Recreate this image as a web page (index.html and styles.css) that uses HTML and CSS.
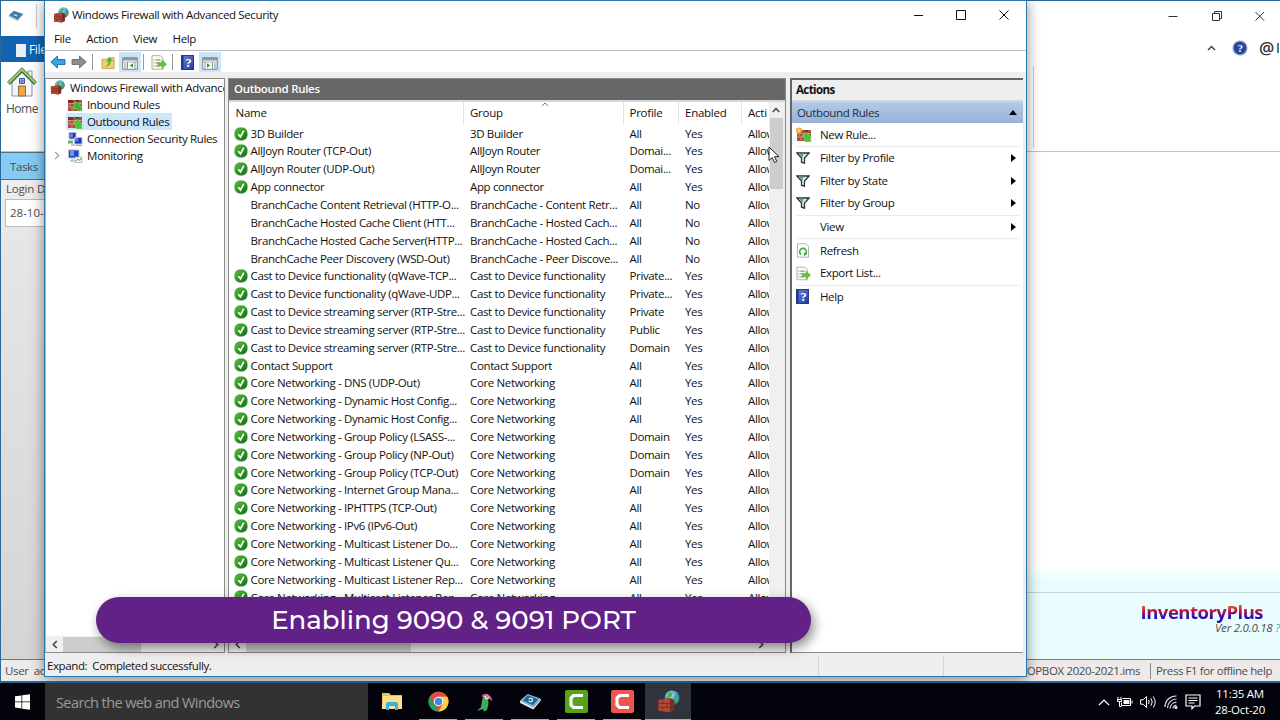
FILE: index.html
```html
<!DOCTYPE html>
<html lang="en">
<head>
  <meta charset="UTF-8">
  <meta name="viewport" content="width=device-width, initial-scale=1.0">
  <title>Windows Firewall with Advanced Security</title>
  <link rel="stylesheet" href="styles.css">
</head>
<body>
  <!-- Shared icons -->
  <svg class="sprite" width="0" height="0">
    <defs>
      <linearGradient id="green" x1="0" y1="0" x2="1" y2="1">
        <stop offset="0" stop-color="#5cc23c"/><stop offset="1" stop-color="#0c6a12"/>
      </linearGradient>
      <linearGradient id="blue" x1="0" y1="0" x2="1" y2="1">
        <stop offset="0" stop-color="#6c86dc"/><stop offset="1" stop-color="#1f3a9c"/>
      </linearGradient>
      <radialGradient id="globe" cx=".4" cy=".3" r=".8">
        <stop offset="0" stop-color="#c4ecf4"/><stop offset=".5" stop-color="#3b9cc8"/><stop offset="1" stop-color="#175a92"/>
      </radialGradient>
    </defs>
    <symbol id="i-firewall" viewBox="0 0 16 16">
      <circle cx="10.5" cy="5.5" r="5.2" fill="url(#globe)"/>
      <path d="M8 1.5l3 .3-1 3-3 1zM12 4l3 1-1 4-2-2z" fill="#4fae55"/>
      <path d="M1 7l8-1.500 3 1.500v7l-3 1.500-8-1z" fill="#7d2c22"/>
      <path d="M1 7l8-1.500v10l-8-1z" fill="#b04a36"/>
      <path d="M1 9.400h11M1 12h11M4 7v2.400M7 9.400V12M4 12v2.500M10 6.500v3" stroke="#7c2a1f" stroke-width=".6" fill="none"/>
    </symbol>
    <symbol id="i-wall" viewBox="0 0 16 14">
      <path d="M1 2h14v11H1z" fill="#a9503c"/>
      <path d="M1 5.500h14M1 9h14M5 2v3.500M11 2v3.500M8 5.500V9M3 5.500V9M5 9v4" stroke="#dba48c" stroke-width=".7"/>
      <path d="M1 2h5v3H1zM9 2h3v3H9z" fill="#7d2c22"/>
    </symbol>
    <symbol id="i-inbound" viewBox="0 0 16 14">
      <use href="#i-wall" width="16" height="14"/>
      <path d="M7 4.500l7.500.5-2 2 3 3.500-3 3-3.500-3.500L7 12z" fill="#35b82f" stroke="#b9eaa8" stroke-width=".5"/>
    </symbol>
    <symbol id="i-outbound" viewBox="0 0 16 14">
      <use href="#i-wall" width="16" height="14"/>
      <path d="M6 8l4.500-4 5 5.500-1 .5.800 4H9l-.500-4.500z" fill="#46c437" stroke="#b9eaa8" stroke-width=".5"/>
    </symbol>
    <symbol id="i-new" viewBox="0 0 16 15">
      <use href="#i-wall" y="1" width="16" height="14"/>
      <path d="M6 9l4.500-4 5 5.500-1 .5.800 4H9l-.500-4.500z" fill="#46c437" stroke="#b9eaa8" stroke-width=".5"/>
      <circle cx="3" cy="3.500" r="3" fill="#f5a83a"/>
      <circle cx="3" cy="3.500" r="1.300" fill="#fde28a"/>
    </symbol>
    <symbol id="i-connection" viewBox="0 0 16 14">
      <path d="M2 .5h7v6.500H2zM7.500 5.500H15V12H7.500z" fill="#1b2fc0" stroke="#b9c4dc"/>
      <path d="M3 1.500h3v4H3zM8.500 6.500h3v3h-3z" fill="#5f86ee"/>
      <path d="M1 8.500h5v3H1z" fill="#6db36a"/>
      <path d="M4 13h4M9 13.300h6" stroke="#8b93a5"/>
    </symbol>
    <symbol id="i-monitor" viewBox="0 0 16 14">
      <path d="M1.500 1H12v8H1.500z" fill="#2444c4" stroke="#b4bccb"/>
      <path d="M3 2h4v5H3z" fill="#6c94ee"/>
      <path d="M3 12h7M5 10v2" stroke="#9aa2b3"/>
      <path d="M8 8h7v5.500H8z" fill="#eef6ee" stroke="#9db0a5" stroke-width=".7"/>
      <path d="M9 12l2-2 1.500 1.500L14.500 9" stroke="#4eaa50" fill="none"/>
    </symbol>
    <symbol id="i-check" viewBox="0 0 14 14">
      <rect x=".8" y=".8" width="12.400" height="12.400" rx="5" fill="url(#green)" stroke="#3d9a33" stroke-width=".6"/>
      <path d="M4.300 7.200l2.200 2.600L9.800 3.600" fill="none" stroke="#fff" stroke-width="1.700"/>
    </symbol>
    <symbol id="i-back" viewBox="0 0 16 14">
      <path d="M.8 7L7.500 1v3.500H15v5H7.500V13z" fill="#3ba3e0" stroke="#1668a6" stroke-width=".9"/>
    </symbol>
    <symbol id="i-forward" viewBox="0 0 16 14">
      <path d="M15.200 7L8.500 1v3.500H1v5h7.500V13z" fill="#8d8d8d" stroke="#6e6e6e" stroke-width=".9"/>
    </symbol>
    <symbol id="i-up" viewBox="0 0 16 15">
      <path d="M1 4h5l1.500-1.500H14V14H1z" fill="#efcf72" stroke="#b8964a" stroke-width=".8"/>
      <path d="M4 12c3-1 4-3 4-5.500H5.500L9 1.500l4 4.500h-2.500C10.500 9.500 8 12 4 12z" fill="#51b52f"/>
    </symbol>
    <symbol id="i-pane" viewBox="0 0 16 13">
      <path d="M.7.7h14.600v11.600H.7z" fill="#fff" stroke="#7d858c"/>
      <path d="M1 1h14v2.500H1z" fill="#8f979e"/>
      <path d="M1 5h14" stroke="#a9b0b6"/>
    </symbol>
    <symbol id="i-tree" viewBox="0 0 16 13">
      <use href="#i-pane" width="16" height="13"/>
      <path d="M5.500 5v7M2 7h2.500M2 9h2.500M2 11h2.500M13 5v7" stroke="#8b9298"/><path d="M11 6.200v4.600L7.800 8.500z" fill="#2b9c2b"/>
    </symbol>
    <symbol id="i-actions" viewBox="0 0 16 13">
      <use href="#i-pane" width="16" height="13"/>
      <path d="M10.500 5v7M12 7h2.500M12 9h2.500M12 11h2.500M3 5v7" stroke="#8b9298"/><path d="M5 6.200v4.600l3.200-2.300z" fill="#2b9c2b"/>
    </symbol>
    <symbol id="i-export" viewBox="0 0 16 15">
      <path d="M1 .7h8.500L12 3.200v11H1z" fill="#fffdf0" stroke="#a09f88" stroke-width=".8"/>
      <path d="M2.500 5h1M2.500 8h1M2.500 11h1M4.500 5h5M4.500 8h3M4.500 11h4" stroke="#77776c"/>
      <path d="M7 7.500h4V5l4.500 4.200L11 13.500V11H7z" fill="#63c83e" stroke="#3c9a25" stroke-width=".5"/>
    </symbol>
    <symbol id="i-help" viewBox="0 0 13 15">
      <rect x=".5" y=".5" width="12" height="14" fill="url(#blue)" stroke="#243a8c"/>
      <path d="M1 1h1.500v13H1z" fill="#1e3592"/>
      <text x="7.300" y="12.300" class="glyph big" text-anchor="middle" fill="#fff">?</text>
    </symbol>
    <symbol id="i-refresh" viewBox="0 0 14 15">
      <path d="M1.500.7h8.500L12.500 3.200v11h-11z" fill="#fff" stroke="#a0a5a0" stroke-width=".8"/>
      <path d="M5 11.500A3.400 3.400 0 1 1 9 11.500" stroke="#3eae3c" stroke-width="1.600" fill="none"/>
      <path d="M8 9v4l3-1.500z" fill="#3eae3c"/>
    </symbol>
    <symbol id="i-filter" viewBox="0 0 14 12">
      <path d="M.8 1h12.400L8.500 6v5.200l-3-1V6z" fill="#dfe9e9" stroke="#22383c" stroke-width="1.300"/>
      <path d="M2.500 1.500h5l-1 4z" fill="#71918f"/>
    </symbol>
  </svg>

  <div class="desktop">
    <!-- InventoryPlus window behind -->
    <div class="inventory">
      <div class="inv-title">
        <svg class="inv-logo" width="16" height="12" viewBox="0 0 24 18"><path d="M1 8L9 1l14 5-8 9z" fill="#3f83b0"/><path d="M1 8l14 7v2L1 10z" fill="#a3bfd0"/><path d="M9 5l7 2-3 4-6-3z" fill="#a8d8ee" stroke="#17466e"/></svg>
        <span class="inv-divider"></span>
        <svg class="inv-controls" width="102" height="14" viewBox="0 0 102 14" fill="none" stroke="#333">
          <path d="M.5 7.500h9M44.500 4.500h7v7h-7zM46.500 4.500v-2h7v7h-2M87.500 3l8.500 8.500M96 3l-8.500 8.500"/>
        </svg>
      </div>
      <div class="inv-tabs">
        <div class="inv-file"><span class="page"></span>File</div>
        <div class="inv-help">
          <svg width="9" height="6" viewBox="0 0 9 6"><path d="M1 5l3.500-3.500L8 5" fill="none" stroke="#444" stroke-width="1.500"/></svg>
          <svg width="16" height="16" viewBox="0 0 16 16"><circle cx="8" cy="8" r="6.900" fill="#2745a0" stroke="#8c9bc4" stroke-width="1.300"/><text x="8" y="12" text-anchor="middle" class="glyph" fill="#fff">?</text></svg>
          <span class="at">@</span>
          <span class="at-edge"></span>
        </div>
      </div>
      <div class="inv-ribbon">
        <div class="home">
          <svg width="30" height="32" viewBox="0 0 30 32">
            <path d="M21 4h4v8h-4z" fill="#f6f6f6" stroke="#8790a4"/>
            <path d="M5 14L15 4l10 10v15H5z" fill="#f4f5fa" stroke="#8790ae"/>
            <path d="M1.500 16.500L15 3l13.500 13.500" fill="none" stroke="#3f7234" stroke-width="4"/>
            <path d="M1.500 16L15 2.500 28.500 16" fill="none" stroke="#a7cf75" stroke-width="1.800"/>
            <path d="M12.500 11.500h5v5h-5z" fill="#9dbbe6" stroke="#46588e"/><path d="M15 11.500v5M12.500 14h5" stroke="#46588e" stroke-width=".7"/>
            <path d="M11.500 19h7v10h-7z" fill="#eda44d" stroke="#9b6930"/>
          </svg>
          <span>Home</span>
        </div>
        <span class="ribbon-edge"></span>
      </div>
      <div class="inv-main">
        <div class="inv-side">
          <div class="tasks">Tasks</div>
          <div class="login">Login D</div>
          <div class="date">28-10-</div>
        </div>
        <div class="inv-page">
          <div class="brand">
            <div class="brand-name">InventoryPlus</div>
            <div class="brand-version">Ver 2.0.0.18 <span>?</span></div>
          </div>
        </div>
      </div>
      <div class="inv-status">
        <span>User&nbsp; ad</span>
        <div class="inv-status-right">
          <span>ROPBOX 2020-2021.ims</span>
          <span class="offline">Press F1 for offline help</span>
        </div>
      </div>
    </div>

    <!-- Firewall console -->
    <div class="window">
      <div class="titlebar">
        <svg width="16" height="16"><use href="#i-firewall"/></svg>
        <span>Windows Firewall with Advanced Security</span>
        <svg class="controls" width="98" height="12" viewBox="0 0 98 12" fill="none" stroke="#111">
          <path d="M1 6.500h9M43.500 1.500h9v9h-9zM86.500 1.500l9 9M95.500 1.500l-9 9"/>
        </svg>
      </div>
      <div class="menubar"><span>File</span><span>Action</span><span>View</span><span>Help</span></div>
      <div class="toolbar">
        <svg width="16" height="14"><use href="#i-back"/></svg>
        <svg class="forward" width="16" height="14"><use href="#i-forward"/></svg>
        <i></i>
        <svg width="15" height="15"><use href="#i-up"/></svg>
        <span class="pressed"><svg width="16" height="13"><use href="#i-tree"/></svg></span>
        <i class="near"></i>
        <svg width="16" height="15"><use href="#i-export"/></svg>
        <i></i>
        <svg width="13" height="15"><use href="#i-help"/></svg>
        <span class="pressed last"><svg width="16" height="13"><use href="#i-actions"/></svg></span>
      </div>

      <div class="panes">
        <div class="tree-pane">
          <div class="tree">
            <div class="root"><svg width="15" height="15"><use href="#i-firewall"/></svg><span>Windows Firewall with Advance</span></div>
            <div class="node"><svg width="16" height="14"><use href="#i-inbound"/></svg><span>Inbound Rules</span></div>
            <div class="node selected"><svg width="16" height="14"><use href="#i-outbound"/></svg><span>Outbound Rules</span></div>
            <div class="node"><svg width="16" height="14"><use href="#i-connection"/></svg><span>Connection Security Rules</span></div>
            <div class="node expandable"><svg class="twisty" width="6" height="9" viewBox="0 0 6 9"><path d="M1 .8l3.700 3.700L1 8.200" fill="none" stroke="#999" stroke-width="1.200"/></svg><svg width="16" height="14"><use href="#i-monitor"/></svg><span>Monitoring</span></div>
          </div>
          <div class="hscroll">
            <svg width="6" height="9" viewBox="0 0 6 9"><path d="M4.800 1L1.300 4.500 4.800 8" fill="none" stroke="#444" stroke-width="1.600"/></svg>
            <span class="thumb tree-thumb"></span>
            <svg class="right" width="6" height="9" viewBox="0 0 6 9"><path d="M1.200 1l3.500 3.500L1.200 8" fill="none" stroke="#444" stroke-width="1.600"/></svg>
          </div>
        </div>

        <div class="list-pane">
          <div class="list-title">Outbound Rules</div>
          <div class="list-body">
            <div class="table">
              <div class="row head">
                <span></span><span>Name</span>
                <span class="sorted">Group<svg width="8" height="5" viewBox="0 0 8 5"><path d="M.8 4L4 1l3.200 3" fill="none" stroke="#777"/></svg></span>
                <span>Profile</span><span>Enabled</span><span>Acti</span>
              </div>
              <div id="rules"></div>
            </div>
            <div class="vscroll">
              <svg width="8" height="6" viewBox="0 0 8 6"><path d="M.8 5L4 1.500 7.200 5" fill="none" stroke="#444" stroke-width="1.500"/></svg>
              <span></span>
            </div>
          </div>
          <div class="hscroll">
            <svg width="6" height="9" viewBox="0 0 6 9"><path d="M4.800 1L1.300 4.500 4.800 8" fill="none" stroke="#444" stroke-width="1.600"/></svg>
            <span class="thumb list-thumb"></span>
            <svg class="right" width="6" height="9" viewBox="0 0 6 9"><path d="M1.200 1l3.500 3.500L1.200 8" fill="none" stroke="#444" stroke-width="1.600"/></svg>
          </div>
        </div>

        <div class="actions-pane">
          <div class="actions-title">Actions</div>
          <div class="actions-head">Outbound Rules<b class="up"></b></div>
          <div class="action"><svg width="16" height="15"><use href="#i-new"/></svg>New Rule...</div>
          <hr>
          <div class="action"><svg width="14" height="12"><use href="#i-filter"/></svg>Filter by Profile<b></b></div>
          <div class="action"><svg width="14" height="12"><use href="#i-filter"/></svg>Filter by State<b></b></div>
          <div class="action"><svg width="14" height="12"><use href="#i-filter"/></svg>Filter by Group<b></b></div>
          <hr>
          <div class="action">View<b></b></div>
          <hr>
          <div class="action"><svg width="14" height="15"><use href="#i-refresh"/></svg>Refresh</div>
          <div class="action"><svg width="15" height="15"><use href="#i-export"/></svg>Export List...</div>
          <hr>
          <div class="action"><svg width="13" height="15"><use href="#i-help"/></svg>Help</div>
        </div>
      </div>
      <div class="statusbar"><span>Expand:&nbsp; Completed successfully.</span><i></i><i></i></div>
    </div>

    <svg class="cursor" width="12" height="18" viewBox="0 0 12 18"><path d="M1 1v13.500l3.200-3 2.300 5 2.300-1-2.300-4.800H11z" fill="#fff" stroke="#222"/></svg>
    <div class="banner">Enabling 9090 &amp; 9091 PORT</div>

    <div class="taskbar">
      <div class="start"><svg width="15" height="16" viewBox="0 0 15 16" fill="#fff"><path d="M0 2.300l6.500-.9v6.200H0zM7.200 1.300L15 .2v7.400H7.200zM0 8.300h6.500v6.200L0 13.600zM7.200 8.300H15v7.500l-7.800-1.100z"/></svg></div>
      <div class="search">Search the web and Windows</div>
      <div class="apps">
        <div class="app"><svg width="20" height="19" viewBox="0 0 20 19"><path d="M0 1h7l2 2h11v14H0z" fill="#e9bf55"/><path d="M1 4h19v13H0z" fill="#fbe08a"/><path d="M4 18v-6q0-2 2-2h8q2 0 2 2v6h-3v-4H7v4z" fill="#37afe0"/></svg></div>
        <div class="app running"><svg width="21" height="21" viewBox="0 0 22 22"><circle cx="11" cy="11" r="10.500" fill="#dd4f42"/><path d="M2 5.600l5 8.600L11 21.500A10.500 10.500 0 0 1 2 5.600z" fill="#21a25c"/><path d="M11 6h9.300A10.500 10.500 0 0 1 11 21.500l4.500-8z" fill="#fdcf44"/><circle cx="11" cy="11" r="5" fill="#fff"/><circle cx="11" cy="11" r="3.900" fill="#4285e8"/></svg></div>
        <div class="app running"><svg width="18" height="20" viewBox="0 0 18 20"><path d="M8 4l5 1 .5 7-1.500 6-3 1.500-1-2.500-6 2 4-4 1-6z" fill="#3faa57"/><path d="M6.500 4q2-3 6-2 4 2 5 7l-3-2-5-1z" fill="#d45a86"/><path d="M9 4l4-.500 1 3-3 1z" fill="#f4f4f4"/><circle cx="12" cy="5" r=".8" fill="#222"/></svg></div>
        <div class="app running"><svg width="23" height="17" viewBox="0 0 24 18"><path d="M1 8L9 1l14 5-8 9z" fill="#86b7d8"/><path d="M1 8l14 7v2.500L1 10.500zM15 15l8-9v2l-8 9.500z" fill="#e2e9ee"/><path d="M9 2.500l11 4-5.500 6.500L4 8z" fill="#226294"/><path d="M10 6q5-1 4 2t-4 0" stroke="#c9ecfa" fill="none" stroke-width="1.300"/></svg></div>
        <div class="app running"><svg width="23" height="23" viewBox="0 0 23 23"><rect width="23" height="23" rx="2" fill="#55a316"/><path d="M18 5.500H8.500L6 8v7l2.500 2.500H18" fill="none" stroke="#fff" stroke-width="3.200"/></svg></div>
        <div class="app running"><svg width="23" height="23" viewBox="0 0 23 23"><rect width="23" height="23" rx="2" fill="#f0554d"/><path d="M18 5.500H8.500L6 8v7l2.500 2.500H18" fill="none" stroke="#fff" stroke-width="3.200"/></svg></div>
        <div class="app running active"><svg width="23" height="23"><use href="#i-firewall"/></svg></div>
      </div>
      <div class="tray">
        <svg width="12" height="8" viewBox="0 0 12 8"><path d="M1 7l5-5 5 5" fill="none" stroke="#fff" stroke-width="1.200"/></svg>
        <svg width="16" height="12" viewBox="0 0 16 12" fill="none" stroke="#fff"><path d="M5.500 2.500h8v7h-9v-3M15 4.500v3M1 .8v3M4 .8v3M.5 3.500h4v2h-4zM2.500 5.500v5h2"/><path d="M6.500 4h6v4h-6z" fill="#fff" stroke="none"/></svg>
        <svg width="17" height="14" viewBox="0 0 17 14" fill="none" stroke="#fff"><path d="M.6 4.800h2.500L6.500 1.500v11L3.100 9.200H.6zM8.500 5q1.400 2 0 4M10.800 3.200q3 3.800 0 7.600M13.200 1.500q4 5.500 0 11"/></svg>
        <svg width="14" height="14" viewBox="0 0 14 14" fill="none" stroke="#ddd" stroke-width="1.200"><path d="M1 12A11 11 0 0 1 12.500 1M3.500 13A9 9 0 0 1 12.500 4M6 13.500A7 7 0 0 1 12.500 7.200M9 13.500A4 4 0 0 1 12.500 10"/><circle cx="12" cy="12.500" r="1" fill="#fff"/></svg>
        <svg width="16" height="16" viewBox="0 0 16 16" fill="none" stroke="#fff" stroke-width="1.200"><path d="M1 1h14v11H9.500L7 14.700V12H1zM3.500 4h9M3.500 6.500h9M3.500 9h6"/></svg>
        <div class="clock"><span>11:35 AM</span><span>28-Oct-20</span></div>
      </div>
    </div>
  </div>

  <script>
    // name, group, profile, enabled
    const rules = [
      ['3D Builder', '3D Builder', 'All', 'Yes'],
      ['AllJoyn Router (TCP-Out)', 'AllJoyn Router', 'Domai...', 'Yes'],
      ['AllJoyn Router (UDP-Out)', 'AllJoyn Router', 'Domai...', 'Yes'],
      ['App connector', 'App connector', 'All', 'Yes'],
      ['BranchCache Content Retrieval (HTTP-O...', 'BranchCache - Content Retr...', 'All', 'No'],
      ['BranchCache Hosted Cache Client (HTT...', 'BranchCache - Hosted Cach...', 'All', 'No'],
      ['BranchCache Hosted Cache Server(HTTP...', 'BranchCache - Hosted Cach...', 'All', 'No'],
      ['BranchCache Peer Discovery (WSD-Out)', 'BranchCache - Peer Discove...', 'All', 'No'],
      ['Cast to Device functionality (qWave-TCP...', 'Cast to Device functionality', 'Private...', 'Yes'],
      ['Cast to Device functionality (qWave-UDP...', 'Cast to Device functionality', 'Private...', 'Yes'],
      ['Cast to Device streaming server (RTP-Stre...', 'Cast to Device functionality', 'Private', 'Yes'],
      ['Cast to Device streaming server (RTP-Stre...', 'Cast to Device functionality', 'Public', 'Yes'],
      ['Cast to Device streaming server (RTP-Stre...', 'Cast to Device functionality', 'Domain', 'Yes'],
      ['Contact Support', 'Contact Support', 'All', 'Yes'],
      ['Core Networking - DNS (UDP-Out)', 'Core Networking', 'All', 'Yes'],
      ['Core Networking - Dynamic Host Config...', 'Core Networking', 'All', 'Yes'],
      ['Core Networking - Dynamic Host Config...', 'Core Networking', 'All', 'Yes'],
      ['Core Networking - Group Policy (LSASS-...', 'Core Networking', 'Domain', 'Yes'],
      ['Core Networking - Group Policy (NP-Out)', 'Core Networking', 'Domain', 'Yes'],
      ['Core Networking - Group Policy (TCP-Out)', 'Core Networking', 'Domain', 'Yes'],
      ['Core Networking - Internet Group Mana...', 'Core Networking', 'All', 'Yes'],
      ['Core Networking - IPHTTPS (TCP-Out)', 'Core Networking', 'All', 'Yes'],
      ['Core Networking - IPv6 (IPv6-Out)', 'Core Networking', 'All', 'Yes'],
      ['Core Networking - Multicast Listener Do...', 'Core Networking', 'All', 'Yes'],
      ['Core Networking - Multicast Listener Qu...', 'Core Networking', 'All', 'Yes'],
      ['Core Networking - Multicast Listener Rep...', 'Core Networking', 'All', 'Yes'],
      ['Core Networking - Multicast Listener Rep...', 'Core Networking', 'All', 'Yes']
    ];

    // Build one row per rule, enabled rules get the green check
    document.getElementById('rules').innerHTML = rules.map(([name, group, profile, enabled]) => `
      <div class="row">
        <span class="mark">${enabled === 'Yes' ? '<svg width="14" height="14"><use href="#i-check"/></svg>' : ''}</span>
        <span>${name}</span><span>${group}</span><span>${profile}</span><span>${enabled}</span><span>Allow</span>
      </div>`).join('');
  </script>
</body>
</html>
```
FILE: styles.css
```css
* {
  box-sizing: border-box;
}

body {
  margin: 0;
  font-family: 'Open Sans', 'Noto Sans', sans-serif;
  font-size: 11.5px;
  letter-spacing: -0.36px;
  line-height: 16px;
  color: #111;
  overflow: hidden;
}

svg {
  display: block;
  flex: none;
}

.sprite {
  position: absolute;
}

.glyph {
  font: bold 11px 'Liberation Serif', serif;
}

.big {
  font-size: 13px;
}

.desktop {
  position: relative;
  width: 1280px;
  height: 720px;
  overflow: hidden;
  background: #fff;
  white-space: nowrap;
}

/* InventoryPlus window */
.inventory {
  position: absolute;
  top: 0;
  left: 0;
  width: 1280px;
  height: 683px;
  display: flex;
  flex-direction: column;
  border: 1px solid #2d6797;
  border-right: 0;
  border-bottom-width: 2px;
  background: #fff;
  color: #4c4c4c;
}

.inv-title {
  height: 35px;
  display: flex;
  align-items: center;
  padding: 0 10px 5px 7px;
}

.inv-divider {
  width: 1px;
  height: 24px;
  margin-left: 12px;
  background: #ccc;
}

.inv-controls {
  margin-left: auto;
}

.inv-tabs {
  height: 26px;
  display: flex;
  justify-content: space-between;
}

.inv-file {
  width: 44px;
  display: flex;
  align-items: center;
  gap: 3px;
  padding: 2px 0 0 15px;
  background: #1263b2;
  color: #fff;
  font-size: 12px;
  overflow: hidden;
}

.page {
  flex: none;
  width: 10px;
  height: 13px;
  background: #e8effa;
}

.inv-help {
  display: flex;
  align-items: center;
  gap: 16px;
  padding: 0 1px 3px 0;
}

.at {
  width: 17px;
  margin-left: -5px;
  font-size: 17px;
  font-weight: 600;
  color: #333;
}

.at-edge {
  width: 2px;
  height: 10px;
  margin-left: -15px;
  background: linear-gradient(90deg, #b4486a, #1d98a6);
}

.inv-ribbon {
  height: 90px;
  display: flex;
  border-bottom: 1px solid #bfc3c5;
}

.home {
  width: 42px;
  padding: 5px 0 0 6px;
}

.home span {
  display: block;
  margin: 2px 0 0 -1px;
  font-size: 12px;
  letter-spacing: -0.5px;
}

.ribbon-edge {
  width: 1px;
  height: 81px;
  margin: 4px 0 0 990px;
  background: #ccc;
}

.inv-main {
  flex: 1;
  display: flex;
}

.inv-side {
  width: 44px;
  background: linear-gradient(#f2f2f2, #e6e6e6 18%, #d4d4d4);
  overflow: hidden;
}

.tasks {
  height: 28px;
  padding: 5px 0 0 9px;
  border: 1px solid #56707d;
  border-width: 1px 0;
  background: #86cbf5;
  line-height: 17px;
}

.login {
  height: 19px;
  padding: 1px 0 0 5px;
  letter-spacing: -0.2px;
}

.date {
  height: 28px;
  margin-left: 4px;
  padding: 5px 0 0 4px;
  border: 1px solid #bbb;
  background: #fff;
  letter-spacing: 0;
}

.inv-page {
  flex: 1;
  display: flex;
  flex-direction: column;
  justify-content: flex-end;
  background: linear-gradient(#fff 415px, #e9fdfe 430px);
}

.brand {
  height: 67px;
  padding: 8px 0 0;
  border-top: 1px solid #c5d5d7;
  text-align: right;
}

.brand-name {
  padding-right: 17px;
  font-size: 18.500px;
  font-weight: 700;
  line-height: 22px;
  letter-spacing: -0.5px;
  background: linear-gradient(#f08030 10%, #c0103c 45%, #2010c0 75%);
  -webkit-background-clip: text;
  background-clip: text;
  color: transparent;
}

.brand-version {
  margin-top: -3px;
  font-style: italic;
  line-height: 16px;
  letter-spacing: -0.2px;
}

.brand-version span {
  color: #38b09c;
}

.inv-status {
  height: 22px;
  display: flex;
  justify-content: space-between;
  align-items: center;
  padding: 0 0 0 4px;
  border-top: 1px solid #777;
  background: #eeeaea;
}

.inv-status-right {
  display: flex;
}

.offline {
  margin-left: 10px;
  padding: 0 8px 0 5px;
  border-left: 1px solid #888;
  letter-spacing: -0.42px;
}

/* Firewall window */
.window {
  position: absolute;
  top: 0;
  left: 44px;
  width: 983px;
  height: 677px;
  display: flex;
  flex-direction: column;
  border: 1px solid #2a77b0;
  background: #eee;
  box-shadow: 0 2px 13px rgba(0, 0, 0, 0.45);
}

.titlebar {
  height: 27px;
  display: flex;
  align-items: center;
  padding: 0 15px 0 8px;
  background: #fff;
}

.titlebar span {
  margin-left: 3px;
}

.controls {
  margin-left: auto;
}

.menubar {
  height: 23px;
  display: flex;
  gap: 15.500px;
  padding: 3px 9px 0;
  border-bottom: 1px solid #bcbcbc;
  background: #fff;
}

.toolbar {
  height: 21px;
  display: flex;
  align-items: center;
  padding: 1px 0 0 5px;
  background: #fff;
}

.toolbar i {
  width: 1px;
  height: 16px;
  margin: 0 8px 0 5px;
  background: #999;
}

.toolbar i.near {
  margin: 0 7px 0 2px;
}

.forward {
  margin-left: 5px;
}

.pressed {
  height: 20px;
  margin-left: 3px;
  padding: 5px 3px 0;
  background: #cbe5f8;
}

.pressed.last {
  margin-left: 5px;
}

.panes {
  height: 575px;
  margin-top: 6px;
  display: flex;
}

.tree-pane {
  width: 180px;
  display: flex;
  flex-direction: column;
  border: 1px solid #8a8a8a;
  border-left-color: #b5b5b5;
  background: #fff;
}

.tree {
  flex: 1;
  overflow: hidden;
}

.root,
.node {
  height: 17px;
  display: flex;
  align-items: center;
  gap: 5px;
  padding-left: 4px;
  line-height: 17px;
}

.root {
  letter-spacing: -0.3px;
}

.node {
  width: max-content;
  gap: 4px;
  margin-left: 20px;
  padding: 0 3px 0 1px;
  letter-spacing: -0.35px;
}

.node.selected {
  background: #cce6fb;
}

.node.expandable {
  margin-left: 0;
  padding-left: 8px;
}

.twisty {
  margin-right: 3px;
}

.hscroll {
  height: 16px;
  display: flex;
  align-items: center;
  padding: 0 5px 0 6px;
  background: #f0f0f0;
}

.thumb {
  height: 15px;
  background: #cdcdcd;
}

.tree-thumb {
  width: 78px;
  margin-left: 5px;
}

.list-thumb {
  width: 165px;
  margin-left: 5px;
}

.right {
  margin-left: auto;
}

.list-pane {
  width: 558px;
  margin-left: 3px;
  display: flex;
  flex-direction: column;
  border: 1px solid #8a8a8a;
}

.list-pane .hscroll .right {
  margin-right: 16px;
}

.list-title {
  height: 21px;
  padding: 2px 0 0 5px;
  background: #676767;
  color: #fff;
  font-weight: 600;
  letter-spacing: -0.3px;
}

.list-body {
  flex: 1;
  min-height: 0;
  display: flex;
  border-top: 2px solid #d6d6d6;
  background: #fff;
}

.table {
  width: 540px;
  overflow: hidden;
}

.row {
  height: 17.850px;
  display: grid;
  grid-template-columns: 21.500px 219.500px 159.500px 55.500px 63px 60px;
  align-items: center;
  line-height: 17.850px;
}

.mark {
  padding-left: 5px;
}

.head {
  height: 22.600px;
  letter-spacing: -0.25px;
}

.head > span {
  height: 22px;
  line-height: 22px;
  position: relative;
}

.head > span:nth-child(2) {
  margin-left: -15px;
}

.head > span:nth-child(n + 3)::before {
  content: '';
  position: absolute;
  left: -7px;
  top: 0;
  height: 22px;
  border-left: 1px solid #e2e2e2;
}

.sorted svg {
  position: absolute;
  left: 71px;
  top: 0;
}

.vscroll {
  flex: 1;
  display: flex;
  flex-direction: column;
  align-items: center;
  gap: 5px;
  padding: 5px 2px 0 0;
  background: #f0f0f0;
}

.vscroll span {
  width: 13px;
  height: 71px;
  background: #cdcdcd;
}

.actions-pane {
  width: 233px;
  margin-left: 4px;
  border: 1px solid #8a8a8a;
  border-top: 2px solid #666;
  border-left: 2px solid #666;
  border-right: 0;
  background: #fff;
}

.actions-title {
  height: 22px;
  padding: 2px 0 0 4px;
  border-bottom: 2px solid #d4d4d4;
  background: #eee;
  font-weight: 700;
  letter-spacing: -0.6px;
}

.actions-head {
  height: 21.400px;
  display: flex;
  align-items: center;
  padding-left: 5px;
  background: linear-gradient(#b4cae6, #97b3d8);
  color: #1e2a44;
  letter-spacing: -0.36px;
}

.action {
  position: relative;
  height: 22.600px;
  display: flex;
  align-items: center;
  padding-left: 28px;
}

.action svg {
  position: absolute;
  left: 4px;
}

.actions-pane b {
  margin: 0 7px 0 auto;
  border: 4.500px solid transparent;
  border-left: 5px solid #000;
  border-right: 0;
}

.actions-pane b.up {
  margin-right: 6px;
  border: 4.500px solid transparent;
  border-bottom: 5px solid #000;
  border-top: 0;
}

hr {
  width: 224px;
  margin: 0 0 0 4px;
  border: 0;
  border-top: 1px solid #ececec;
}

.statusbar {
  flex: 1;
  display: flex;
  align-items: center;
  padding: 2px 0 0 2px;
}

.statusbar span {
  flex: none;
  width: 771px;
  letter-spacing: -0.4px;
}

.statusbar i {
  flex: none;
  width: 125px;
  height: 20px;
  border-left: 1px solid #d4d4d4;
}

.statusbar i:last-child {
  width: 80px;
}

.cursor {
  position: absolute;
  left: 768px;
  top: 146px;
}

.banner {
  position: absolute;
  left: 96px;
  top: 597px;
  width: 715px;
  height: 46px;
  border-radius: 23px;
  background: #612186;
  box-shadow: 3px 5px 12px rgba(0, 0, 0, 0.45);
  color: #fff;
  font-family: Montserrat, Inter, sans-serif;
  font-size: 26px;
  font-weight: 500;
  line-height: 46px;
  letter-spacing: 0;
  text-align: center;
}

/* Taskbar */
.taskbar {
  position: absolute;
  top: 683px;
  left: 0;
  width: 1280px;
  height: 37px;
  display: flex;
  background: #02030b;
  color: #fff;
}

.start {
  width: 45px;
  display: flex;
  align-items: center;
  justify-content: center;
}

.search {
  width: 323px;
  padding-left: 11px;
  background: #323232;
  color: #9a9a9a;
  font-size: 14.500px;
  letter-spacing: -0.59px;
  line-height: 39px;
}

.apps {
  display: flex;
  margin-left: 1px;
}

.app {
  width: 46px;
  display: flex;
  align-items: center;
  justify-content: center;
}

.running {
  background: linear-gradient(#8ab4dc, #8ab4dc) center bottom / 38px 1px no-repeat;
}

.active {
  background: linear-gradient(#8ab4dc, #8ab4dc) center bottom / 46px 1px no-repeat, #30333b;
}

.tray {
  display: flex;
  align-items: center;
  gap: 7px;
  margin-left: auto;
  padding-right: 14px;
}

.clock {
  width: 52px;
  margin-left: 6px;
  display: flex;
  flex-direction: column;
  align-items: center;
  font-size: 11.500px;
  line-height: 16px;
  letter-spacing: -0.25px;
}
```
